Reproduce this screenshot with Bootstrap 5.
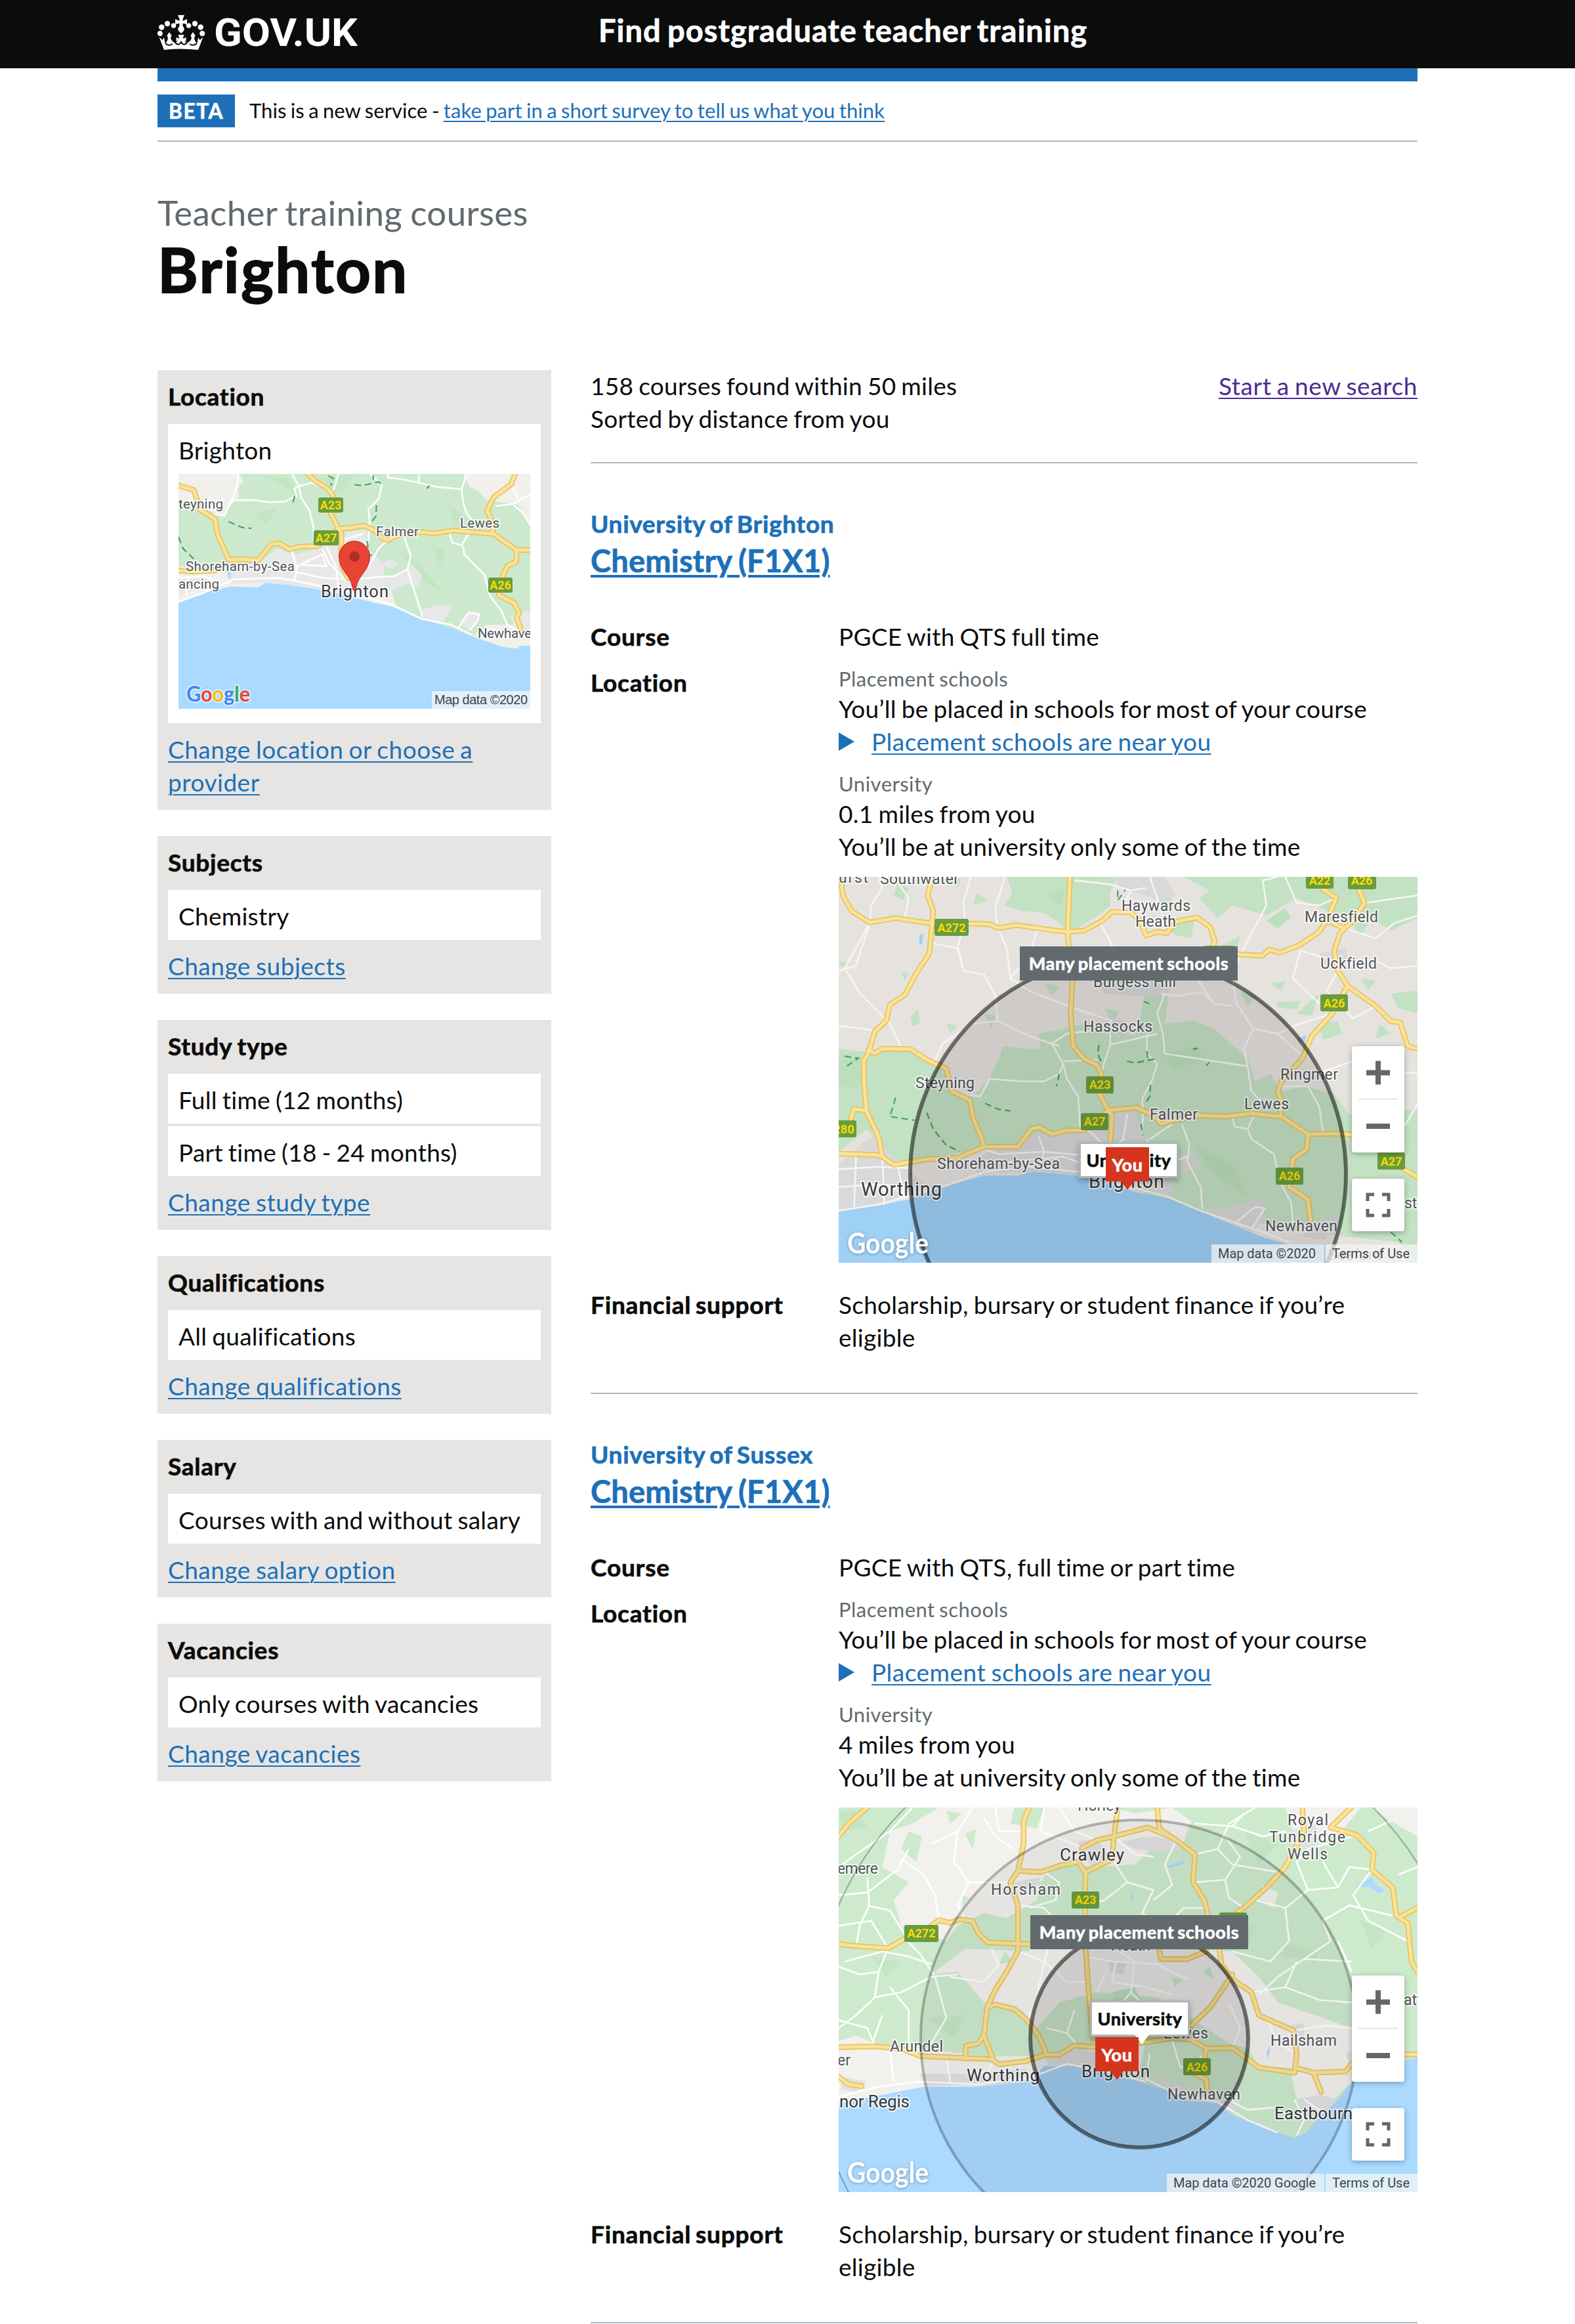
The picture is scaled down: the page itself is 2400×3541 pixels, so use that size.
<!DOCTYPE html>
<html lang="en">
<head>
<meta charset="utf-8">
<meta name="viewport" content="width=device-width, initial-scale=1">
<title>Teacher training courses in Brighton – Find postgraduate teacher training – GOV.UK</title>
<link href="https://cdn.jsdelivr.net/npm/bootstrap@5.3.0/dist/css/bootstrap.min.css" rel="stylesheet">
<style>
:root{--ink:#0b0c0c;--govblue:#1d70b8;--line:#b1b4b6;--grey:#626a6e;--panel:#e6e5e3}
body{font-family:Lato,"Liberation Sans",sans-serif;font-size:37px;line-height:50px;color:var(--ink);background:#fff;overflow-x:hidden;font-variant-ligatures:none;letter-spacing:.28px;word-spacing:-1.8px}
h1,h2,h3,dt,.service,.pin,.phase-tag{font-weight:700;-webkit-text-stroke:.7px currentColor}
a{color:var(--govblue);text-decoration-thickness:2px;text-underline-offset:4px}
.wrap{width:1920px;margin:0 auto}
.topbar{background:var(--ink);height:104px}
.brand{width:672px;display:block;height:104px}
.service{color:#fff;font-size:47px;letter-spacing:1px;word-spacing:-3px;line-height:60px;padding-bottom:12px}
.bluebar{height:20px;background:var(--govblue)}
.phase{padding:20px 0;border-bottom:2px solid var(--line);font-size:31px;line-height:48px;letter-spacing:.05px;word-spacing:-1.6px}
.phase-tag{background:var(--govblue);color:#fff;font-size:31.5px;letter-spacing:1.6px;width:118px;height:50px;margin-right:22px;text-align:center;line-height:50px}
.caption{font-size:53px;line-height:60px;color:var(--grey);margin-top:78px;letter-spacing:.3px}
.place{font-size:94px;line-height:100px;letter-spacing:2.4px;margin:6px 0 104px;-webkit-text-stroke-width:1.8px}
.side{width:600px}
.main{width:1260px}
.filter{background:var(--panel);padding:15px 16px 17px;margin-bottom:40px}
.filter h2{font-size:37px;line-height:50px;letter-spacing:.75px;margin:0 0 17px}
.filter ul{margin:0 0 15px}
.filter li{background:#fff;padding:15px 16px 11px}
.filter li+li{margin-top:4px}
.filter a{letter-spacing:.5px}
.minimap{width:536px;height:358px;margin:11px 0 11px;display:block}
svg{letter-spacing:0;word-spacing:0}
.summary{margin-top:-1px;height:143px;border-bottom:2px solid var(--line)}
.visited{color:#4c2c92;letter-spacing:.6px}
.result{padding-top:67px;border-bottom:2px solid var(--line)}
.result-one{height:1418px}
.result-two{height:1416px}
.provider{font-size:37px;line-height:50px;color:var(--govblue);letter-spacing:.7px;word-spacing:-3px;margin:0}
.course{font-size:47px;line-height:60px;letter-spacing:.2px;margin:1px 0 61px}
.course a{text-decoration-thickness:4px;text-underline-offset:4px}
.facts{margin:0}
.facts dt{width:378px;letter-spacing:.8px;word-spacing:-3px}
.facts dd{width:882px;margin:0}
.where{margin-top:19px}
.where dt{padding-top:1px}
.money{margin-top:39px}
.hint{font-size:31px;line-height:40px;color:var(--grey);letter-spacing:.5px;margin-bottom:1px}
.hint-next{margin-top:19px}
.tri{width:0;height:0;border:14px solid transparent;border-left:24px solid var(--govblue);border-right:0;margin-right:26px;margin-top:-1px}
.near{letter-spacing:.5px}
.map{position:relative;width:882px;overflow:hidden;margin-top:21px}
.map>svg{display:block}
.pin{position:absolute;font-size:27px;line-height:52px;text-align:center;letter-spacing:.6px;word-spacing:-2px;white-space:nowrap}
.pin-many{background:var(--grey);color:#fff;width:332px;height:52px}
.pin-uni{background:#fff;border:3px solid var(--line);width:152px;height:55px;line-height:50px;box-shadow:0 4px 8px rgba(0,0,0,.3)}
.pin-uni.tail::after{content:"";position:absolute;left:65px;top:49px;border:11px solid transparent;border-top:15px solid #fff;border-bottom:0}
.pin-you{background:#d4351c;color:#fff;width:66px;height:52px;line-height:54px}
.pin-you::after{content:"";position:absolute;left:23px;top:52px;border:10px solid transparent;border-top:13px solid #d4351c;border-bottom:0}
.m1 .pin-many{left:276px;top:106px}.m1 .pin-uni{left:366px;top:404px}.m1 .pin-you{left:407px;top:412px}
.m2 .pin-many{left:292px;top:164px}.m2 .pin-uni{left:383px;top:294px}.m2 .pin-you{left:391px;top:350px}
.ctl{position:absolute;left:782px;width:80px;background:#fff;border-radius:4px;box-shadow:0 2px 8px rgba(0,0,0,.3)}
.ctl svg{display:block}
.m1 .zoomer{top:258px}.m1 .full{top:460px}.m2 .zoomer{top:256px}.m2 .full{top:458px}
.rd{fill:none;vector-effect:non-scaling-stroke;stroke-linejoin:round;stroke-linecap:round}
.edge{stroke:#ecc15a;stroke-width:8.5px}
.fillr{stroke:#f7e49a;stroke-width:5px}
.lane{fill:none;stroke:#fff;stroke-width:2.6px;vector-effect:non-scaling-stroke;stroke-linejoin:round}
.m1 .lane{stroke:#f6f5f3}
.trail{fill:none;stroke:#3fa663;stroke-width:2.2px;stroke-dasharray:10 6;vector-effect:non-scaling-stroke}
.town text{font-family:Roboto,sans-serif;fill:#505659;stroke:#fff;stroke-opacity:.75;stroke-width:4px;paint-order:stroke;stroke-linejoin:round}
.town .big{fill:#36393b}
.shield rect{fill:#689c3f}
.shield text{font:700 18px Roboto,sans-serif;fill:#fcdc00;text-anchor:middle}
.attr rect{fill:#f5f5f5;fill-opacity:.72}
.attr text{font-family:Roboto,sans-serif;font-size:20px;fill:#444}
.glogo{font-family:Lato,sans-serif;font-weight:700;font-size:43px;fill:#fff;filter:drop-shadow(0 1px 2px rgba(0,0,0,.3))}
</style>
</head>
<body>

<header class="topbar">
  <div class="wrap d-flex align-items-center">
    <svg class="brand" viewBox="0 0 672 104" aria-label="GOV.UK">
      <g fill="#fff">
        <path d="M31 23H41L38.500 29V32L45 29V37L38.500 35.500V40Q42 43 40 47L36 51L32 47Q30 43 33.500 40V35.500L27 37V29L33.500 32V29Z"/>
        <circle cx="24.500" cy="39" r="3.800"/><circle cx="47.500" cy="39" r="3.800"/>
        <circle cx="15" cy="36" r="4.200"/><circle cx="57" cy="36" r="4.200"/>
        <circle cx="6.300" cy="41.500" r="4.200"/><circle cx="65.700" cy="41.500" r="4.200"/>
        <circle cx="3.800" cy="51" r="4"/><circle cx="68.200" cy="51" r="4"/>
        <path d="M2.500 56.500L7.500 61L10 57L11.500 66Q15 64 16 58L14.500 54L18 49L21.500 54L20 58Q22 63.500 27 65.500Q29.500 64 31 61.500L28.500 63V57L33.500 59L31.500 53H40.500L38.500 59L43.500 57V63L41 61.500Q42.500 64 45 65.500Q50 63.500 52 58L50.500 54L54 49L57.500 54L56 58Q57 64 60.500 66L62 57L64.500 61L69.500 56.500L62 76Q36 73 10 76Z"/>
      </g>
      <g fill="none" stroke="#0b0c0c" stroke-width="2">
        <path d="M12 66Q17 71 23 67M27 65Q32 71 36 64Q40 71 45 65M49 67Q55 71 60 66"/>
      </g>
      <text x="86" y="70" textLength="219" lengthAdjust="spacingAndGlyphs" font-family="Roboto" font-weight="700" font-size="60" fill="#fff">GOV.UK</text>
    </svg>
    <div class="service">Find postgraduate teacher training</div>
  </div>
</header>

<div class="wrap">
  <div class="bluebar"></div>
  <div class="phase d-flex"><span class="phase-tag">BETA</span><span>This is a new service - <a href="#">take part in a short survey to tell us what you think</a></span></div>

  <div class="caption">Teacher training courses</div>
  <h1 class="place">Brighton</h1>

  <div class="d-flex justify-content-between align-items-start">
    <aside class="side">
      <section class="filter">
        <h2>Location</h2>
        <ul class="list-unstyled"><li>Brighton
          <svg class="minimap" viewBox="0 0 536 358">
            <defs><path id="roads0" class="rd" d="M103 425L130 432L160 440L175 480L180 505L215 525L240 540L248 590L270 635L290 678L340 676L400 680L450 625L480 622L515 642L560 633L620 632L655 610L700 572L740 570L795 562L835 578L865 605L885 612L905 600L950 588L1000 583L1060 588L1130 578L1280 590L1310 610L1365 645H1416M585 385L615 410L660 435L680 460L672 520L700 572L712 590L710 640L715 705L735 740M1360 385L1345 420L1280 465L1255 510L1275 550L1276 590M1365 645L1363 685L1330 700L1305 750L1300 800L1355 825L1375 860L1365 875L1380 912M103 715L150 718L240 715"/></defs>
            <svg width="536" height="358" viewBox="103 385 1313 802" preserveAspectRatio="none">
              <path fill="#cde9cd" d="M103 385H1416V1187H103Z"/>
              <path fill="#c4e5c4" d="M640 400L760 385L730 440L690 450ZM420 390L520 400L560 470L500 430ZM380 520L470 500L430 560ZM920 640L1000 690L1100 800L1010 740ZM1100 480L1160 520L1140 560ZM1040 620L1100 650L1080 700Z"/>
              <path fill="#f1f0eb" d="M103 385H330L345 410L325 435L330 465L300 490L270 528L235 520L215 508L180 500L103 470ZM1165 385H1416V560L1370 490L1290 480L1255 475L1215 440L1190 430ZM103 700L240 712L290 725L640 740L860 720L900 790L915 835L1010 880L1100 905L1200 940L1250 900L1416 900V985H1300L900 860L640 800L300 780L103 822Z"/>
              <path fill="#e8e8e8" d="M400 690L470 640L540 660L620 640L665 610L720 585L810 575L800 620L820 650L870 690L870 740L960 715L970 690L1010 730L1000 770L960 760L880 790L740 795L430 755L300 760L280 700ZM103 740L200 735L240 760L103 800ZM860 690L895 675L925 690L890 712ZM1010 850L1060 835L1130 830L1090 890L1020 880ZM1150 890L1190 850L1230 860L1190 925ZM1340 870L1416 850V930L1370 920ZM230 490L270 500L260 525Z"/>
              <path fill="#aadaff" d="M103 822L200 790L300 770L400 772L430 757L520 765L640 782L740 802L830 824L900 838L1010 880L1100 905L1200 940L1310 975L1365 982L1380 972H1416V1187H103ZM272 640L300 735L290 745L280 700Z"/>
              <path class="lane" d="M325 385L322 430L300 475L275 528L238 522M300 475L390 475L440 482L500 480L545 460L535 435L552 427L527 385M552 427L600 415L680 445M552 427L560 465L592 510L605 560L610 610M700 385L682 440M820 385L862 425L850 470L812 505L817 560L810 620L785 640M885 385V397L950 405L1070 430L1160 437L1165 480L1178 520L1210 555M1160 437L1178 385M1000 387V412M1115 590L1125 620L1160 628L1185 590M1165 630L1170 660L1245 730L1265 800L1310 855L1330 900L1380 930M1285 495L1350 488L1390 520L1416 560M1350 488L1416 455M1350 435L1370 470M945 600L970 665L958 710L985 790L1015 875M103 822L200 790L310 745L480 740L620 765L740 790L900 832L1010 880L1120 900L1200 935M525 645L545 705L535 750M545 700L640 660L655 700L560 695M640 640L665 690L730 750M655 635L690 700L700 780M540 720L640 740L760 745L870 735L905 735L960 710M885 610L850 640L820 690L790 720M720 610L790 590M700 640L730 620M1145 915L1185 860L1225 865L1220 885L1190 920M103 740L200 735L230 745M140 740L130 800"/>
              <path class="trail" d="M290 548L340 568L375 571M103 600L120 640L165 680M537 460L527 492M842 492L840 530L822 550M760 422L790 425L850 412L865 425M830 390V405M662 392L680 400L672 425M808 615L812 660L830 665M1030 435L1040 425"/>
              <use href="#roads0" class="edge"/><use href="#roads0" class="fillr"/>
            </svg>
            <g class="shield"><rect x="213" y="36" width="38" height="23" rx="3"/><text x="232" y="54">A23</text><rect x="206" y="86" width="38" height="23" rx="3"/><text x="225" y="104">A27</text><rect x="472" y="158" width="37" height="23" rx="3"/><text x="490.500" y="176">A26</text></g>
            <g class="town" font-size="20.500">
              <text x="0" y="53" textLength="68">teyning</text><text x="301" y="95" textLength="65">Falmer</text><text x="429" y="82" textLength="60">Lewes</text><text x="11" y="148" textLength="166">Shoreham-by-Sea</text><text x="0" y="175" textLength="62">ancing</text><text x="456" y="250" textLength="82">Newhave</text>
              <text class="big" x="217" y="188" font-size="25.500" textLength="103">Brighton</text>
            </g>
            <path fill="#ea4335" stroke="#b5281d" stroke-width="1" d="M268 178Q265.500 178 265 172C262 154 244.500 147 244.500 126A23.500 23.500 0 0 1 291.500 126C291.500 147 274 154 271 172Q270.500 178 268 178Z"/><circle cx="268" cy="126" r="8" fill="#b03027"/>
            <g font-family="Lato" font-weight="700" font-size="33" stroke="#fff" stroke-opacity=".55" stroke-width="4" paint-order="stroke"><text x="12" y="347" textLength="97" lengthAdjust="spacingAndGlyphs"><tspan fill="#4285f4">G</tspan><tspan fill="#ea4335">o</tspan><tspan fill="#fbbc05">o</tspan><tspan fill="#4285f4">g</tspan><tspan fill="#34a853">l</tspan><tspan fill="#ea4335">e</tspan></text></g>
            <rect x="386" y="331" width="150" height="27" fill="#f5f7fa" fill-opacity=".75"/><text x="390" y="351" textLength="142" font-family="Liberation Sans" font-size="20" fill="#444">Map data ©2020</text>
          </svg></li></ul>
        <a href="#">Change location or choose a provider</a>
      </section>
      <section class="filter"><h2>Subjects</h2><ul class="list-unstyled"><li>Chemistry</li></ul><a href="#">Change subjects</a></section>
      <section class="filter"><h2>Study type</h2><ul class="list-unstyled"><li>Full time (12 months)</li><li>Part time (18 - 24 months)</li></ul><a href="#">Change study type</a></section>
      <section class="filter"><h2>Qualifications</h2><ul class="list-unstyled"><li>All qualifications</li></ul><a href="#">Change qualifications</a></section>
      <section class="filter"><h2>Salary</h2><ul class="list-unstyled"><li>Courses with and without salary</li></ul><a href="#">Change salary option</a></section>
      <section class="filter"><h2>Vacancies</h2><ul class="list-unstyled"><li>Only courses with vacancies</li></ul><a href="#">Change vacancies</a></section>
    </aside>

    <main class="main">
      <div class="summary d-flex justify-content-between">
        <div>158 courses found within 50 miles<br>Sorted by distance from you</div>
        <a href="#" class="visited">Start a new search</a>
      </div>

      <article class="result result-one">
        <h3 class="provider">University of Brighton</h3>
        <h2 class="course"><a href="#">Chemistry (F1X1)</a></h2>
        <dl class="facts">
          <div class="d-flex"><dt>Course</dt><dd>PGCE with QTS full time</dd></div>
          <div class="d-flex where"><dt>Location</dt>
            <dd>
              <div class="hint">Placement schools</div>
              <div>You’ll be placed in schools for most of your course</div>
              <div class="d-flex align-items-center"><span class="tri"></span><a href="#" class="near">Placement schools are near you</a></div>
              <div class="hint hint-next">University</div>
              <div>0.1 miles from you</div>
              <div>You’ll be at university only some of the time</div>
              <div class="map m1">
                <svg width="882" height="588" viewBox="0 0 882 588">
                  <defs><path id="roads1" class="rd" d="M20 16L25 90L50 155L97 198L165 180L215 192L258 200L360 202L415 205L440 220L485 208L580 228L622 235L665 230L715 190L740 155L790 158L815 190L830 250L860 235L885 240L910 195L965 178L1000 215L1012 270L1008 300L1080 325L1138 330L1158 305L1185 318L1235 290L1290 235L1310 190L1335 100L1300 65M262 16L250 90L265 150L260 240L255 320L220 400L190 485L150 525L140 590L110 630L95 710L80 750L82 850L88 950L120 1050L130 1130L160 1162M628 16L622 235L625 290L635 420L630 560L637 690L665 740L700 765L712 800L707 880L730 945L740 965L735 1090M14 1118L110 1122L130 1130L160 1162L250 1140L330 1135L400 1090L490 1090L525 1020L545 1012L580 1040L620 1025L665 1025L700 985L730 945L805 935L850 965L870 1000L890 990L970 965L1040 970L1110 958L1190 970L1260 1040L1330 1038L1380 1042M92 705L110 718L130 700L205 702L250 745L300 780L315 870L362 905L372 980L390 1040L400 1090M45 985L55 940L85 945M1395 65L1410 120L1380 190L1345 240L1330 310L1340 390L1365 450L1440 530L1480 590L1505 595L1525 690L1551 700M1365 450L1325 560L1270 650L1245 740L1190 830L1180 870L1190 910L1187 970M1310 190L1355 220M1260 1040L1257 1100L1220 1140L1210 1250L1260 1300L1267 1385M1480 1150L1551 1210"/></defs>
                  <svg width="882" height="588" viewBox="14 16 1537 1536" preserveAspectRatio="none">
                    <path fill="#e6e3df" d="M14 16H1551V1552H14Z"/>
                    <path fill="#c3e1c3" d="M460 16H750L735 80L735 130L700 170L630 240L600 200L560 160L500 150L455 130L475 80ZM930 16H1551V180L1480 230L1430 180L1400 250L1370 190L1230 100L1150 170L1060 130L1020 180L970 100L1000 70ZM14 700L95 715L205 700L250 745L300 790L320 880L370 890L410 830L440 740L450 690L500 700L550 700L545 640L620 620L640 610L680 600L800 650L815 580L825 490L890 490L880 600L960 590L1010 620L1100 740L1120 830L1160 800L1190 870L1250 850L1330 880L1370 960L1551 940V1552L1330 1440L980 1360L780 1250L700 1060L600 1060L400 1100L150 1160L90 1020L14 1110Z"/>
                    <path fill="#c3e1c3" d="M170 45L200 60L185 110L160 90ZM300 20L340 16L330 60ZM205 570L225 545L230 600L210 610ZM180 400L200 395L190 430ZM300 600L330 610L310 640ZM380 80L410 110L370 130ZM860 90L900 100L900 150L870 130ZM880 210L960 180L950 260L910 250ZM1020 300L1080 250L1070 320ZM1080 470L1125 490L1100 530ZM1175 515L1240 510L1230 545L1180 535ZM1230 560L1290 480L1270 570ZM1290 600L1340 590L1350 640L1300 665ZM1400 420L1440 430L1420 470ZM1480 480L1551 470V560L1500 540ZM1160 440L1200 430L1190 470ZM560 440L600 450L580 490ZM720 540L760 550L740 600ZM1450 600L1480 640L1440 660ZM14 350L45 365L20 375ZM400 560L430 570L420 620ZM1400 730L1450 720L1500 760L1420 800Z"/>
                    <path fill="#bcdebd" d="M14 750L70 730L90 800L60 860L14 840ZM560 90L620 60L600 130ZM880 720L960 690L990 740L900 780ZM1200 140L1215 180L1180 220L1150 190ZM960 1090L1060 1160L1100 1290L1010 1200Z"/>
                    <path fill="#d9d9da" d="M14 1160L100 1050L130 1090L200 1180L240 1240L130 1325L14 1340ZM410 1110L470 1090L540 1040L640 1030L700 1010L730 960L800 945L815 1000L830 1060L900 1130L960 1110L975 1170L900 1210L900 1290L780 1240L650 1200L490 1195L380 1200L380 1150ZM980 1340L1060 1330L1150 1290L1110 1400L1060 1395ZM1080 1400L1130 1330L1150 1370L1110 1430ZM740 16H880L910 90L870 110L760 60ZM1290 320L1360 300L1370 380L1310 370ZM690 570L780 590L760 620ZM1100 900L1150 890L1190 920L1150 950ZM1250 1400L1340 1370L1350 1470L1250 1450ZM700 420L900 440L880 500L720 480ZM100 1030L130 1040L125 1130L105 1100Z"/>
                    <path fill="#e6e3df" d="M1340 760L1551 700V930L1380 950L1345 880ZM260 1250L400 1195L500 1190L420 1210L300 1260ZM1310 1440L1500 1470L1551 1552H1300Z"/>
                    <path fill="#9fd0f6" d="M14 1345L120 1325L200 1300L290 1250L400 1205H490L530 1190L650 1205L760 1250L800 1270L890 1297L975 1350L1060 1400L1140 1450L1210 1480L1305 1478V1552H14ZM1230 665L1255 645L1250 680ZM228 250L238 240L236 285H228Z"/>
                    <path class="lane" d="M120 16L130 60L100 130L97 198L60 300L30 380L70 480L150 600L178 690M160 16L200 100L190 180M365 16L345 120L350 200L330 290L345 390L400 405L430 490L437 590L520 650L600 690M260 280L330 300L345 390M455 16L430 140L435 215L460 300L470 420L520 470L640 540L740 590M540 230L520 330L470 420M640 30L730 45L790 70L830 60M700 180L720 230L760 350L790 430M760 160L790 70M880 200L860 100L840 16M880 480L860 560L875 640L880 720L970 740L1100 770M860 640L735 685L720 750L712 800M833 640L832 720L860 760L845 830L820 900L822 960L820 1030M735 590L735 685M1080 325L1060 420L1070 520L1115 620L1090 700L1100 770L1110 870L1150 930M1115 620L1180 640L1240 720M1010 520L1060 530M910 490L980 475L1010 520L970 430L940 330M870 480L910 490M1180 16L1140 30L1150 130L1080 325M1200 16L1230 120L1290 130L1335 100M1410 120L1551 90M1355 220L1440 260L1490 200L1551 170M1340 390L1310 470L1380 580L1440 530M1310 340L1240 310L1220 420L1290 520M1551 370L1480 380L1440 350L1340 370M1325 560L1240 600L1180 640M1300 790L1400 740L1480 800L1551 795M1190 850L1260 850L1290 930L1300 1030M14 610L80 620L110 630M14 390L60 370L97 198M580 680L610 760L600 800L560 830L500 830L415 820L390 890L362 885M610 750L700 745M580 680L620 640L730 620M610 760L620 820L650 890L655 1010L690 1040M270 745L290 680L370 600L437 590M14 1345L120 1320L300 1245L400 1190L520 1170L650 1190L760 1240L890 1290L975 1345L1140 1430L1210 1470M400 1100L440 1120L560 1110L700 1130L760 1180M410 1160L540 1140L610 1130L720 1190M545 1050L560 1110L550 1160M690 1040L720 1090M780 960L770 1060L720 1120M925 1000L945 1080L940 1150L975 1250L980 1340M1060 970L1065 1010L1100 1020L1115 970M1100 1020L1110 1060L1170 1120L1185 1230L1215 1310L1220 1390L1260 1430M840 1060L900 1000M830 1060L900 1150L940 1130M14 1180L120 1170L200 1175M14 1250L140 1240L200 1290M60 1130L55 1330M130 1130L135 1320M170 1160L190 1300M1070 1390L1120 1330L1145 1335L1110 1420M1551 920L1520 1000L1440 1040"/>
                    <path class="trail" d="M165 895L150 970L215 985M248 955L265 1020L300 1085L335 1108M403 918L440 942L470 948M600 800L592 850M705 685L702 720L712 755M755 70V110L775 68M780 750L800 757L850 742L860 755M832 710L835 740M842 845L840 890L830 915M817 1000L822 1045M825 513L838 520M955 702L968 698M1480 1430L1510 1470M30 730L66 738L35 770M990 768L998 755"/>
                    <use href="#roads1" class="edge"/><use href="#roads1" class="fillr"/>
                  </svg>
                  <g class="shield"><rect x="146" y="64" width="52" height="26" rx="3"/><text x="172" y="84">A272</text><rect x="712" y="-8" width="42" height="26" rx="3"/><text x="733" y="12">A22</text><rect x="776" y="-8" width="43" height="27" rx="3"/><text x="797" y="12">A26</text><rect x="734" y="179" width="42" height="26" rx="3"/><text x="755" y="199">A26</text><rect x="377" y="304" width="42" height="26" rx="3"/><text x="398" y="323">A23</text><rect x="369" y="360" width="42" height="26" rx="3"/><text x="390" y="379">A27</text><rect x="666" y="443" width="42" height="26" rx="3"/><text x="687" y="462">A26</text><rect x="821" y="420" width="42" height="26" rx="3"/><text x="842" y="440">A27</text><rect x="-20" y="371" width="47" height="26" rx="3"/><text x="8" y="391">280</text><rect x="556" y="105" width="48" height="26" rx="3"/></g>
                  <g class="town" font-size="23">
                    <text x="0" y="9" textLength="45">urst</text><text x="63" y="11" textLength="120">Southwater</text><text x="431" y="52" textLength="105">Haywards</text><text x="452" y="76" textLength="62">Heath</text><text x="710" y="69" textLength="112">Maresfield</text><text x="734" y="140" textLength="86">Uckfield</text><text x="388" y="168" textLength="126">Burgess Hill</text><text x="373" y="236" textLength="105">Hassocks</text><text x="673" y="309" textLength="88">Ringmer</text><text x="117" y="322" textLength="90">Steyning</text><text x="618" y="354" textLength="68">Lewes</text><text x="474" y="370" textLength="73">Falmer</text><text x="150" y="445" textLength="187">Shoreham-by-Sea</text><text x="650" y="540" textLength="110">Newhaven</text><text x="862" y="505">st</text><text x="745" y="584" textLength="83" opacity=".6">Seaford</text>
                    <text class="big" x="34" y="486" font-size="29" textLength="123">Worthing</text><text class="big" x="381" y="474" font-size="29" textLength="115">Brighton</text>
                  </g>
                  <circle cx="441" cy="453" r="332" fill="#000" fill-opacity=".1" stroke="#000" stroke-opacity=".52" stroke-width="6"/>
                  <text class="glogo" x="13" y="574" textLength="124" lengthAdjust="spacingAndGlyphs">Google</text>
                  <g class="attr"><rect x="568" y="560" width="172" height="28"/><rect x="742" y="560" width="140" height="28"/><text x="578" y="581" textLength="149">Map data ©2020</text><text x="752" y="581" textLength="118">Terms of Use</text></g>
                </svg>
                <span class="pin pin-many">Many placement schools</span>
                <span class="pin pin-uni">University</span>
                <span class="pin pin-you">You</span>
                <div class="ctl zoomer"><svg width="80" height="162" viewBox="0 0 80 162"><path d="M10 80.500H70" stroke="#e6e6e6" stroke-width="2"/><path d="M22 40.500H58M40 22.500V58.500M22 122H58" stroke="#666" stroke-width="8"/></svg></div>
                <div class="ctl full"><svg width="80" height="80" viewBox="0 0 80 80"><path d="M24 34V24H34M46 24H56V34M56 46V56H46M34 56H24V46" fill="none" stroke="#666" stroke-width="5"/></svg></div>
              </div>
            </dd></div>
          <div class="d-flex money"><dt>Financial support</dt><dd>Scholarship, bursary or student finance if you’re eligible</dd></div>
        </dl>
      </article>

      <article class="result result-two">
        <h3 class="provider">University of Sussex</h3>
        <h2 class="course"><a href="#">Chemistry (F1X1)</a></h2>
        <dl class="facts">
          <div class="d-flex"><dt>Course</dt><dd>PGCE with QTS, full time or part time</dd></div>
          <div class="d-flex where"><dt>Location</dt>
            <dd>
              <div class="hint">Placement schools</div>
              <div>You’ll be placed in schools for most of your course</div>
              <div class="d-flex align-items-center"><span class="tri"></span><a href="#" class="near">Placement schools are near you</a></div>
              <div class="hint hint-next">University</div>
              <div>4 miles from you</div>
              <div>You’ll be at university only some of the time</div>
              <div class="map m2">
                <svg width="882" height="586" viewBox="0 0 882 586">
                  <defs><path id="roads2" class="rd" d="M14 572L70 580L145 588L190 550L240 520L280 478L310 488L335 475L370 482L385 530L410 565L520 572M520 37L505 90V180L490 285L470 330L490 420V600L460 680L430 750L408 820L400 930L425 1025M408 820L430 808L480 825L515 870L545 930L565 1000M14 975L110 972L180 980L232 1010L420 1022L440 1042L510 1030L565 1003L600 1005L640 968L700 975L760 970L830 955L900 940L950 945L990 980L1060 978L1130 1055L1225 1075L1230 1000L1222 910L1130 850L1110 760L1060 710L1030 650L1025 590M755 37L745 150L740 240L670 290L668 370L670 600L680 800L690 940M860 37L865 120L910 165L960 220L955 330L985 400L995 460M490 285L550 290L600 265L650 250L668 290M660 195L700 165L745 150L835 115L900 155M1375 37L1320 115L1390 145L1435 215L1430 280L1485 350L1495 460L1525 490L1535 640L1551 680M1245 37L1250 130L1200 270L1150 350L1090 430L1070 450M1060 690L1000 820L950 890M865 590L870 630L940 630L990 600M990 980L985 1020M960 1080L990 1100L992 1140M1225 1055L1275 1075L1295 1150M1275 1075L1360 1070L1376 1040M14 1090L40 1120L75 1128M90 37L40 100L14 150M350 1020L352 970L385 960L400 925M1500 1003H1551M1510 460L1551 430"/></defs>
                  <svg width="882" height="586" viewBox="14 37 1537 1505" preserveAspectRatio="none">
                    <path fill="#cdeacd" d="M14 37H1551V1542H14Z"/>
                    <path fill="#f2f1ee" d="M150 130L210 100L280 37H480L470 100L540 120L560 37H740L800 60L900 37L950 90L930 170L850 190L800 260L700 270L620 260L560 300L540 400L460 470L400 450L330 500L300 560L180 500L160 400L200 330L130 270ZM1200 37H1400L1350 130L1290 180L1220 130ZM1430 37H1551V150L1480 90ZM260 690L350 590L520 600L560 460L640 480L870 590L1060 600L1130 700L1180 800L1376 900V1040L1300 1060L1130 1050L1100 980L1050 960L940 850L860 780L700 760L600 800L540 900L500 830L400 800L330 680ZM14 950L60 930L110 960L400 1010L560 1010L700 980L830 950L810 1080L720 1070L520 1130L230 1140L14 1190ZM1140 340L1180 370L1170 430L1120 400ZM1200 960L1376 940V1110L1290 1240L1230 1180Z"/>
                    <path fill="#cdeacd" d="M200 130L235 150L220 250L180 200ZM350 140L380 120L370 200ZM300 50L340 60L310 100ZM455 600L475 640L440 650ZM800 160L830 150L820 190ZM900 700L930 710L905 740ZM540 330L580 320L570 380ZM340 380L360 390L345 430ZM980 680L1000 660L1010 710ZM1200 740L1230 750L1210 790Z"/>
                    <path fill="#c3e5c4" d="M14 60L60 50L90 110L30 130ZM1090 130L1180 180L1130 260ZM1040 480L1120 500L1100 570ZM1200 570L1290 600L1280 640L1190 620ZM100 620L180 640L140 700ZM250 860L350 850L320 940ZM740 760L800 740L850 900L760 870ZM1400 480L1470 520L1430 590Z"/>
                    <path fill="#e1e1e2" d="M480 330L550 310L540 350L490 360ZM650 170L700 160L740 240L690 270L650 220ZM760 170L850 150L930 170L900 210L800 200ZM230 1080L400 1080L510 1060L520 1120L240 1125ZM560 1010L640 980L720 1000L720 1060L570 1045ZM840 1080L900 1110L980 1160L1080 1190L1060 1230L930 1180ZM1230 1180L1290 1160L1340 1180L1280 1270ZM1210 130L1280 100L1290 190L1220 210ZM20 1090L90 1110L60 1150L20 1140ZM730 640L780 640L770 690L735 680ZM1210 890L1250 880L1250 930L1215 930ZM1360 1000L1376 990V1060Z"/>
                    <path fill="#aadaff" d="M14 1195L100 1170L240 1130L380 1130L520 1110L560 1048L640 1050L700 1070L810 1110L880 1140L940 1185L1020 1195L1060 1240L1100 1265L1160 1300L1225 1330L1255 1310L1290 1250L1340 1180L1376 1110L1440 1060L1551 1015V1542H14ZM888 265L930 245V258L890 275ZM1385 350L1405 330L1430 312L1440 340L1465 360L1450 375L1420 345ZM1150 1000L1160 960L1155 1020ZM790 390L796 360V410Z"/>
                    <path class="lane" d="M14 270L80 200L150 130L210 37M14 380L90 370L170 280L200 200M90 310L95 420L70 500L60 580M90 420L150 440L200 560M14 500L100 480L145 588L120 680L110 780L60 850L14 900M14 660L70 690L120 680M30 640L130 600L200 620L260 650M150 740L200 830L200 960M110 780L180 760L260 700L330 690M240 1010L300 860L270 700L230 610L190 550M14 870L90 900L110 972M100 972L130 850M260 180L330 130L370 37M330 130L320 250L360 330L470 330M280 478L270 380L240 300L180 240M360 330L330 420L350 475M400 80L430 150L480 200M430 37L440 130L500 130M560 37L550 130L620 170L660 195M600 37L640 130L700 165M560 290L600 330L590 400L520 430M490 420L560 430L600 500L670 520M580 540L560 640L620 720L675 720M490 600L560 640L540 780L515 870M420 590L440 650L400 720L310 700M745 150L800 220L850 230M740 240L780 330L720 400L670 420M780 330L850 360L820 450L860 500M700 480L720 560L800 640L790 760M670 620L740 640L860 650L940 710M750 640L740 720L830 740L900 770M720 690L700 760M910 165L880 260L900 340L850 400M960 220L1020 200L1050 100L1120 37M1020 200L1060 260L1180 290M960 100L1060 110L1140 150L1200 130M955 330L1040 320L1080 230L1040 150M1040 320L1050 390L1090 430M1000 430L930 430L890 490M1120 400L1200 430L1260 360L1340 350L1370 270L1430 280M1260 360L1230 250L1260 200L1390 145M1200 430L1210 560L1160 640L1060 600M1250 630L1320 560L1300 480L1370 420L1485 460M1250 630L1180 700L1130 770M1250 630L1376 640M1340 350L1300 250M1060 110L1090 60M1480 90L1420 130M1500 300L1551 270M1430 280L1380 380L1420 480L1525 560M1340 560L1376 680M1110 760L1200 740L1290 790L1376 800M1200 740L1230 640M1222 910L1310 890L1376 900M1150 860L1180 960L1230 1000M1060 978L1080 900L1050 800M940 800L900 870L850 850L790 760L740 850L720 930M640 830L620 920L650 970M565 900L620 920M990 980L960 1050M900 950L920 1050L960 1080M840 1000L830 1100L900 1150L1020 1190L1100 1260L1180 1310M1060 1190L1100 1220L1180 1210M1225 1180L1250 1260L1230 1320M1250 1180L1300 1230M14 1170L120 1130L230 1110L380 1120L520 1095L620 1040L720 1070L830 1110M300 1015L310 1110M425 1025L400 1110M150 980L160 1110"/>
                    <use href="#roads2" class="edge"/><use href="#roads2" class="fillr"/>
                  </svg>
                  <g class="shield"><rect x="100" y="179" width="52" height="26" rx="3"/><text x="126" y="198">A272</text><rect x="355" y="128" width="42" height="26" rx="3"/><text x="376" y="147">A23</text><rect x="525" y="382" width="42" height="26" rx="3"/><text x="546" y="402">A26</text><rect x="580" y="160" width="42" height="26" rx="3"/></g>
                  <g class="town" font-size="23">
                    <text x="364" y="5" textLength="66">Horley</text><text x="232" y="133" textLength="106">Horsham</text><text x="684" y="27" textLength="62">Royal</text><text x="656" y="53" textLength="116">Tunbridge</text><text x="684" y="79" textLength="61">Wells</text><text x="-2" y="101" textLength="62">emere</text><text x="78" y="372" textLength="81">Arundel</text><text x="-2" y="393">er</text><text x="501" y="445" textLength="111">Newhaven</text><text x="495" y="352" textLength="68">Lewes</text><text x="415" y="218" textLength="60">Heath</text><text x="658" y="363" textLength="101">Hailsham</text><text x="861" y="301">att</text>
                    <text class="big" x="337" y="81" font-size="26" textLength="98">Crawley</text><text class="big" x="1" y="457" font-size="26" textLength="107">nor Regis</text><text class="big" x="195" y="417" font-size="26" textLength="111">Worthing</text><text class="big" x="370" y="411" font-size="26" textLength="104">Brighton</text><text class="big" x="664" y="475" font-size="26" textLength="133">Eastbourne</text>
                  </g>
                  <circle cx="458" cy="352" r="501" fill="none" stroke="#000" stroke-opacity=".28" stroke-width="2"/>
                  <circle cx="458" cy="352" r="333" fill="#000" fill-opacity=".05" stroke="#000" stroke-opacity=".26" stroke-width="4"/>
                  <circle cx="458" cy="352" r="166" fill="#000" fill-opacity=".1" stroke="#000" stroke-opacity=".52" stroke-width="6"/>
                  <text class="glogo" x="13" y="572" textLength="124" lengthAdjust="spacingAndGlyphs">Google</text>
                  <g class="attr"><rect x="500" y="558" width="240" height="28"/><rect x="742" y="558" width="140" height="28"/><text x="510" y="579" textLength="217">Map data ©2020 Google</text><text x="752" y="579" textLength="118">Terms of Use</text></g>
                </svg>
                <span class="pin pin-many">Many placement schools</span>
                <span class="pin pin-uni tail">University</span>
                <span class="pin pin-you">You</span>
                <div class="ctl zoomer"><svg width="80" height="162" viewBox="0 0 80 162"><path d="M10 80.500H70" stroke="#e6e6e6" stroke-width="2"/><path d="M22 40.500H58M40 22.500V58.500M22 122H58" stroke="#666" stroke-width="8"/></svg></div>
                <div class="ctl full"><svg width="80" height="80" viewBox="0 0 80 80"><path d="M24 34V24H34M46 24H56V34M56 46V56H46M34 56H24V46" fill="none" stroke="#666" stroke-width="5"/></svg></div>
              </div>
            </dd></div>
          <div class="d-flex money"><dt>Financial support</dt><dd>Scholarship, bursary or student finance if you’re eligible</dd></div>
        </dl>
      </article>
    </main>
  </div>
</div>
<script src="https://cdn.jsdelivr.net/npm/bootstrap@5.3.0/dist/js/bootstrap.bundle.min.js"></script>
</body>
</html>
